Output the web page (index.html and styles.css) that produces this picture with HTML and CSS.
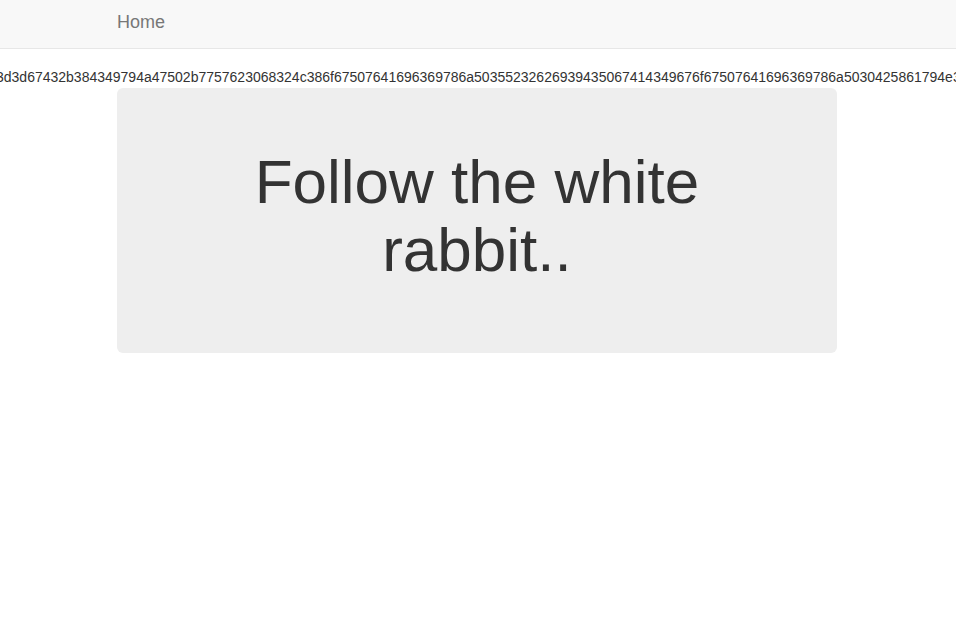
FILE: index.html
```html
<!DOCTYPE html>
<html>
<head>
<meta charset="utf-8">
<title>Home</title>
<link rel="stylesheet" href="styles.css">
</head>
<body>
<nav class="navbar">
  <div class="container">
    <a class="brand" href="#">Home</a>
  </div>
</nav>
<div class="hex">3d3d67432b384349794a47502b7757623068324c386f67507641696369786a50355232626939435067414349676f67507641696369786a5030425861794e3d3d67432b384349794a47502b77576230</div>
<div class="container">
  <div class="jumbotron">
    <h1>Follow the white rabbit..</h1>
  </div>
</div>
</body>
</html>
```

FILE: styles.css
```css
html, body {
  margin: 0;
  padding: 0;
  overflow-x: hidden;
}
body {
  font-family: "Liberation Sans", Arial, Helvetica, sans-serif;
  font-size: 14px;
  line-height: 20px;
  color: #333;
  background: #fff;
}
.navbar {
  height: 48px;
  background: #f8f8f8;
  border-bottom: 1px solid #e7e7e7;
}
.container {
  width: 720px;
  margin: 0 auto;
  padding: 0 15px;
}
.brand {
  display: block;
  width: max-content;
  font-size: 18px;
  line-height: 20px;
  padding: 12px 0 16px 0;
  color: #777;
  text-decoration: none;
  margin-left: -1px;
}
.hex {
  margin-top: 18px;
  white-space: nowrap;
  overflow: hidden;
  text-indent: -4px;
  height: 20px;
  line-height: 20px;
  font-size: 14px;
  color: #333;
}
.jumbotron {
  margin: 1px 1px 0 -1px;
  background: #eee;
  border-radius: 6px;
  padding: 60px 60px 69px;
  text-align: center;
}
.jumbotron h1 {
  margin: 0;
  font-size: 62px;
  line-height: 68px;
  font-weight: 500;
  color: #333;
}
```
